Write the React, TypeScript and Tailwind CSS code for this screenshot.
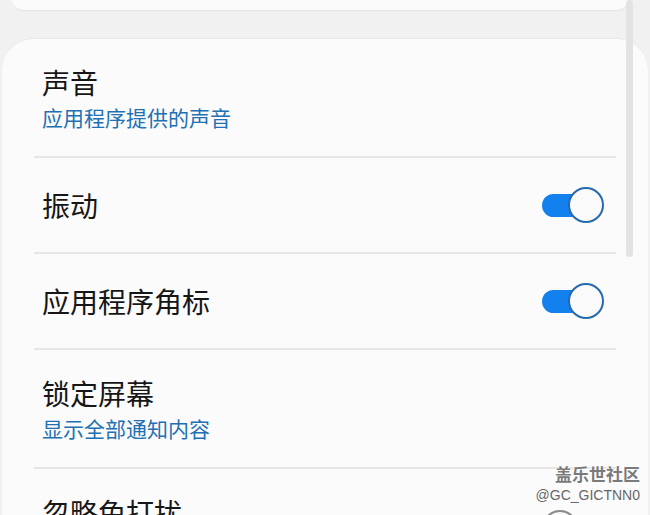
import React from "react";

type Item = {
  title: string;
  sub?: string;
  toggle?: "on" | "off";
};

const items: Item[] = [
  { title: "声音", sub: "应用程序提供的声音" },
  { title: "振动", toggle: "on" },
  { title: "应用程序角标", toggle: "on" },
  { title: "锁定屏幕", sub: "显示全部通知内容" },
  { title: "忽略免打扰", sub: "即使开启了免打扰也允许这些通知", toggle: "off" },
];

const Toggle = ({ on }: { on: boolean }) => (
  <div className="relative w-[62px] h-[36px] shrink-0">
    {on ? (
      <>
        <div className="absolute left-0 top-[7px] w-[50px] h-[23px] rounded-full bg-[#1380f0]" />
        <div className="absolute right-0 top-0 w-[36px] h-[36px] rounded-full bg-[#fafafa] border-2 border-[#2569b0]" />
      </>
    ) : (
      <>
        <div className="absolute left-[4px] top-[7px] w-[54px] h-[23px] rounded-full border-2 border-[#8a8a8a]" />
        <div className="absolute left-0 top-0 w-[36px] h-[36px] rounded-full bg-[#fafafa] border-2 border-[#8a8a8a]" />
      </>
    )}
  </div>
);

const Row = ({ item }: { item: Item }) => {
  if (item.sub) {
    return (
      <div className="flex items-center justify-between pl-[40px] pr-[44px] pt-[26px] pb-[26px]">
        <div className="flex flex-col">
          <span className="text-[28px] leading-[34px] text-[#161616]">{item.title}</span>
          <span className="mt-[5px] text-[21px] leading-[26px] text-[#2270b4]">{item.sub}</span>
        </div>
        {item.toggle && <Toggle on={item.toggle === "on"} />}
      </div>
    );
  }
  return (
    <div className="flex items-center justify-between pl-[40px] pr-[44px] h-[94px]">
      <span className="text-[28px] leading-[34px] text-[#161616]">{item.title}</span>
      {item.toggle && <Toggle on={item.toggle === "on"} />}
    </div>
  );
};

export default function App() {
  return (
    <div
      className="relative w-[650px] h-[515px] overflow-hidden bg-[#f1f1f1]"
      style={{ fontFamily: '"Noto Sans CJK SC", "Noto Sans", sans-serif' }}
    >
      {/* previous card, mostly scrolled away */}
      <div className="ml-[12px] w-[616px] h-[11px] rounded-b-[26px] bg-[#fbfbfb] border-b border-[#e6e6e6]" />

      {/* notification settings card */}
      <div className="mt-[27px] mx-[2px] rounded-t-[32px] bg-[#fbfbfb] border-t border-[#e8e8e8] min-h-[500px]">
        {items.map((item, i) => (
          <div key={item.title}>
            {i > 0 && <div className="mx-[32px] h-[2px] bg-[#e6e6e6]" />}
            <Row item={item} />
          </div>
        ))}
      </div>

      {/* scrollbar */}
      <div className="absolute left-[626px] top-0 w-[7px] h-[257px] rounded-full bg-[#e3e3e3]" />

      {/* watermark */}
      <div className="absolute right-[10px] bottom-[11px] flex flex-col items-end">
        <span
          className="text-[17px] leading-[21px] font-bold text-[#7a7a7a]"
          style={{ textShadow: "0 0 2px #fff, 0 0 2px #fff" }}
        >
          盖乐世社区
        </span>
        <span
          className="mt-[3px] text-[14px] leading-[17px] text-[#666]"
          style={{ fontFamily: '"Liberation Sans", sans-serif', textShadow: "0 0 2px #fff" }}
        >
          @GC_GICTNN0
        </span>
      </div>
    </div>
  );
}
